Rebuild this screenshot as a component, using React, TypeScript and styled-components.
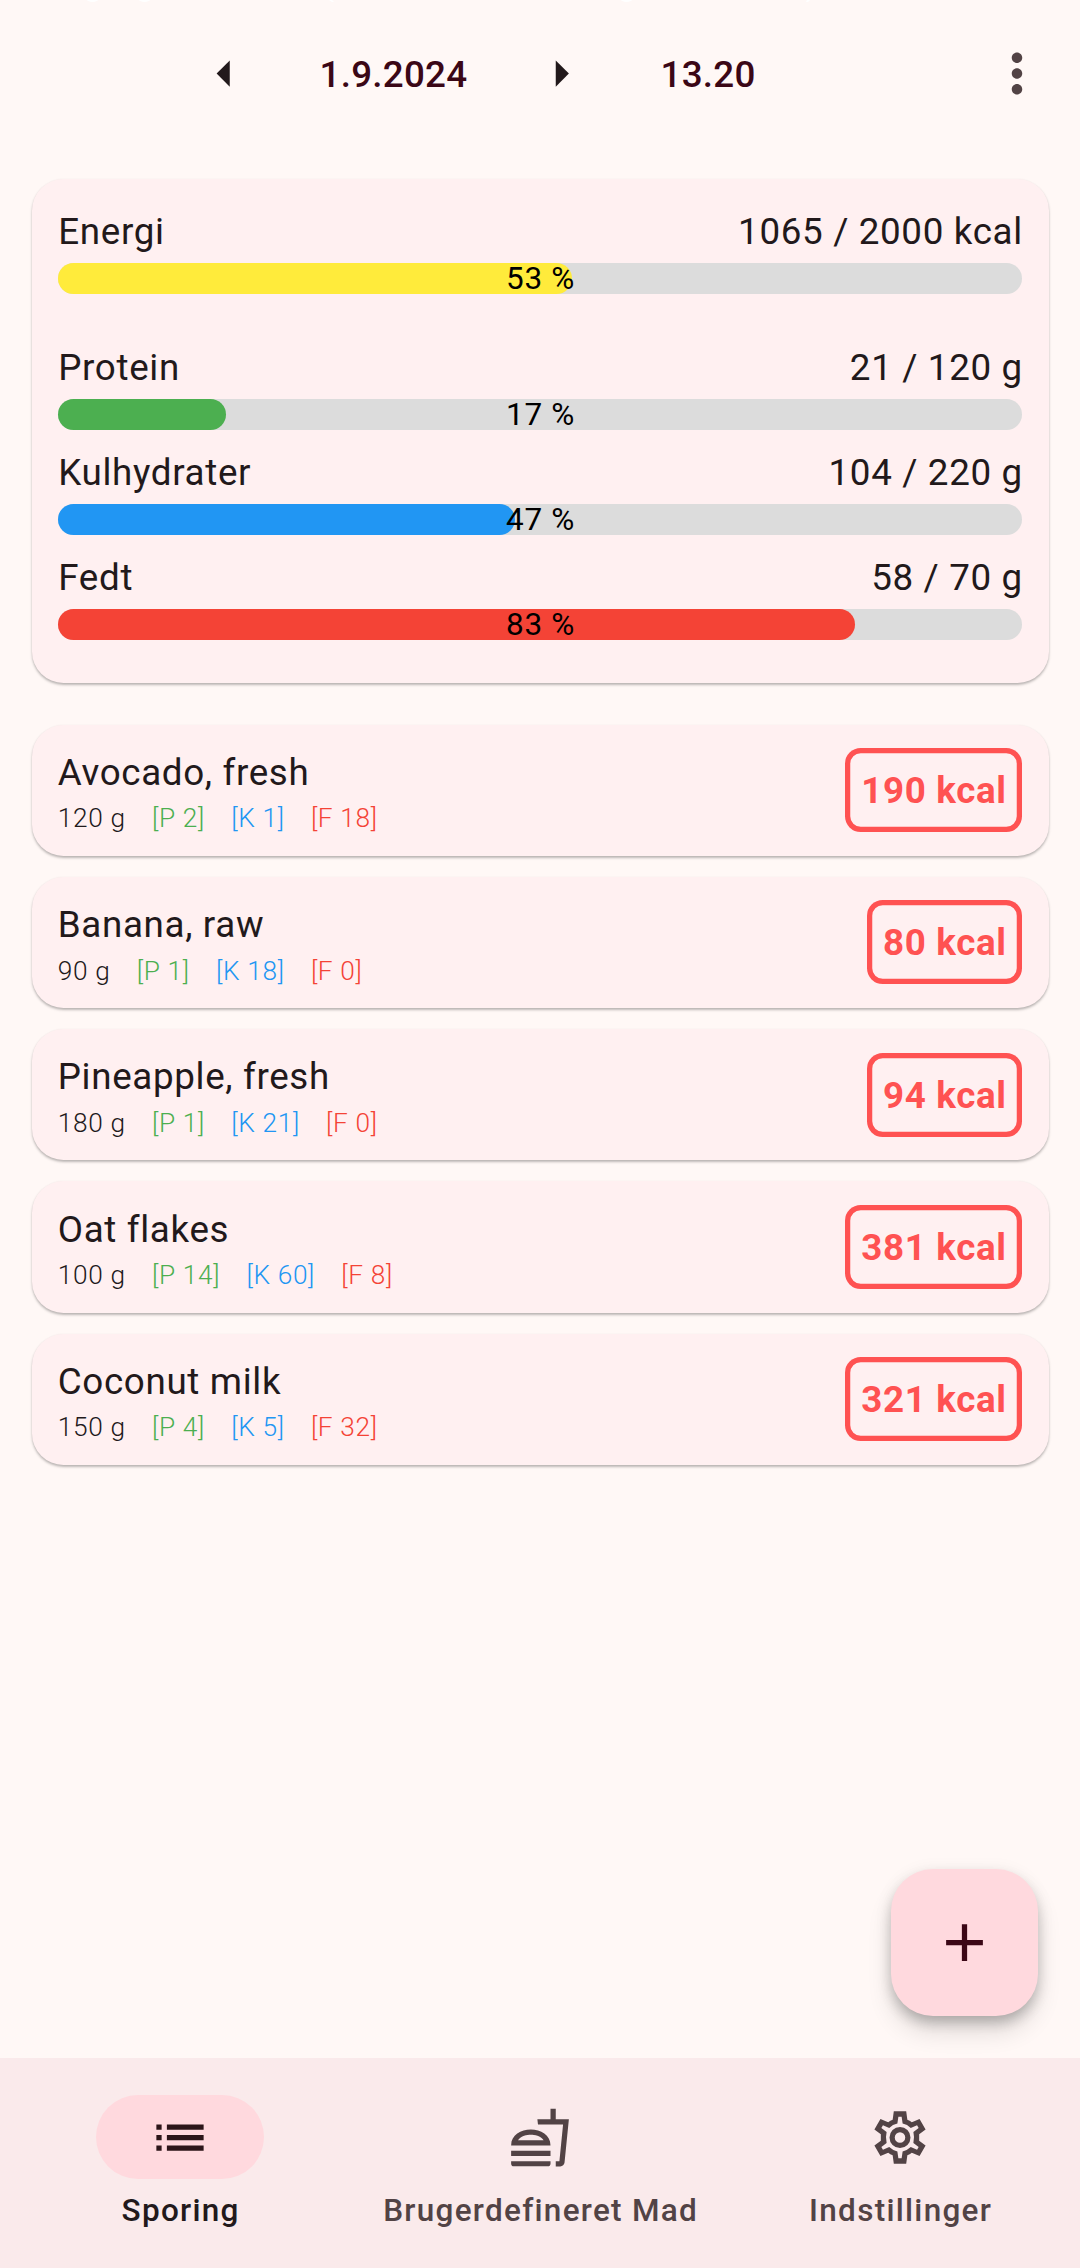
import React from "react";
import styled, { createGlobalStyle } from "styled-components";

const Global = createGlobalStyle`
  *, *::before, *::after { box-sizing: border-box; }
  body { margin: 0; background: #fff8f6; font-family: Roboto, "Noto Sans", sans-serif; }
`;

const Screen = styled.div`
  position: relative;
  display: flex;
  flex-direction: column;
  width: 1080px;
  height: 2268px;
  overflow: hidden;
  background: #fff8f6;
  color: #22191b;
  font-size: 36.75px;
`;

const StatusBar = styled.svg`
  position: absolute;
  top: 0;
  left: 0;
  fill: #fff;
`;

const Header = styled.header`
  display: flex;
  align-items: center;
  height: 147px;
  padding: 0 31px 0 193px;
  color: #3b0716;
  font-weight: 500;
  letter-spacing: 0.26px;
`;

const DateText = styled.span`
  width: 273px;
  padding: 2px 0 0 2px;
  text-align: center;
`;

const TimeText = styled.span`
  flex: 1;
  padding: 2px 0 0 67.5px;
`;

const Icon = styled.svg<{ $color: string }>`
  display: block;
  flex: none;
  height: 63px;
  fill: ${(p) => p.$color};
`;

const Main = styled.main`
  display: flex;
  flex: 1;
  flex-direction: column;
  padding: 31.5px 31.5px 0;
`;

const Card = styled.section`
  border-radius: 31.5px;
  background: #fff0f1;
  box-shadow: 0 2px 2.6px rgba(0, 0, 0, 0.25), 0 0.5px 2px rgba(0, 0, 0, 0.04);
`;

const Summary = styled(Card)`
  height: 504px;
  padding: 26.25px;
`;

const Meter = styled.div<{ $gap?: number }>`
  display: flex;
  flex-direction: column;
  height: 105px;
  margin-bottom: ${(p) => p.$gap ?? 0}px;
`;

const MeterHead = styled.div`
  display: flex;
  justify-content: space-between;
  height: 57.75px;
  padding-left: 0.5px;
  margin-right: -0.6px;
  line-height: 53.5px;
  letter-spacing: 0.66px;
`;

const Track = styled.div`
  position: relative;
  height: 31.5px;
  border-radius: 15.75px;
  background: #dcdcdc;
`;

const Fill = styled.div<{ $color: string }>`
  height: 100%;
  border-radius: 15.75px;
  background: ${(p) => p.$color};
`;

const Percent = styled.span`
  position: absolute;
  top: -3px;
  left: 0;
  width: 100%;
  height: 38px;
  padding-left: 1px;
  color: #000;
  font-size: 31.5px;
  line-height: 38px;
  letter-spacing: 0.66px;
  text-align: center;
`;

const FoodList = styled.div`
  display: flex;
  flex-direction: column;
  gap: 21px;
  margin-top: 42px;
`;

const FoodCard = styled(Card)`
  display: flex;
  align-items: center;
  justify-content: space-between;
  height: 131.25px;
  padding: 0 26.25px;
`;

const FoodInfo = styled.div`
  padding-top: 4px;
`;

const FoodName = styled.div`
  height: 52.5px;
  line-height: 52.5px;
  letter-spacing: 0.66px;
`;

const Macros = styled.div`
  display: flex;
  gap: 26.25px;
  height: 38px;
  font-size: 26.25px;
  font-weight: 300;
  line-height: 38px;
  letter-spacing: 0.66px;
`;

const Macro = styled.span<{ $color?: string }>`
  color: ${(p) => p.$color ?? "inherit"};
`;

const Badge = styled.div`
  height: 84px;
  padding: 0 15.5px 0 16.5px;
  border-radius: 15.75px;
  box-shadow: inset 0 0 0 5.25px #ff5252;
  color: #ff5252;
  font-weight: 700;
  line-height: 85px;
  letter-spacing: 0.66px;
`;

const Fab = styled.button`
  position: absolute;
  right: 42px;
  bottom: 252px;
  display: grid;
  place-items: center;
  width: 147px;
  height: 147px;
  padding: 0;
  border: 0;
  border-radius: 42px;
  background: #ffd9de;
  box-shadow: 0 8px 13px -2px rgba(0, 0, 0, 0.2), 0 16px 24px rgba(0, 0, 0, 0.12), 0 3px 18px rgba(0, 0, 0, 0.08);
`;

const Nav = styled.nav`
  position: relative;
  display: grid;
  grid-template-columns: repeat(3, 1fr);
  height: 210px;
  padding-top: 37px;
  background: #faeaeb;
`;

const NavItem = styled.div<{ $active?: boolean }>`
  display: flex;
  flex-direction: column;
  align-items: center;
  gap: 10px;
  color: ${(p) => (p.$active ? "#22191b" : "#524345")};
`;

const NavLabel = styled.span`
  padding-left: 1.3px;
  font-size: 31.5px;
  font-weight: 500;
  line-height: 43px;
  letter-spacing: 1.28px;
  white-space: nowrap;
`;

const Pill = styled.div<{ $active?: boolean }>`
  display: flex;
  justify-content: center;
  width: 168px;
  height: 84px;
  padding-top: 11px;
  border-radius: 42px;
  background: ${(p) => (p.$active ? "#ffd9de" : "transparent")};
`;

const GREEN = "#4caf50";
const BLUE = "#2196f3";
const RED = "#f44336";

const meters = [
  { name: "Energi", value: 1065, goal: 2000, unit: "kcal", share: 53.3, color: "#ffeb3b", gap: 31 },
  { name: "Protein", value: 21, goal: 120, unit: "g", share: 17.4, color: GREEN },
  { name: "Kulhydrater", value: 104, goal: 220, unit: "g", share: 47.4, color: BLUE },
  { name: "Fedt", value: 58, goal: 70, unit: "g", share: 82.7, color: RED },
];

const foods = [
  { name: "Avocado, fresh", grams: 120, p: 2, k: 1, f: 18, kcal: 190 },
  { name: "Banana, raw", grams: 90, p: 1, k: 18, f: 0, kcal: 80 },
  { name: "Pineapple, fresh", grams: 180, p: 1, k: 21, f: 0, kcal: 94 },
  { name: "Oat flakes", grams: 100, p: 14, k: 60, f: 8, kcal: 381 },
  { name: "Coconut milk", grams: 150, p: 4, k: 5, f: 32, kcal: 321 },
];

const paths = {
  left: "M14 7l-5 5 5 5V7z",
  right: "M10 17l5-5-5-5v10z",
  more: "M12 8c1.1 0 2-.9 2-2s-.9-2-2-2-2 .9-2 2 .9 2 2 2zm0 2c-1.1 0-2 .9-2 2s.9 2 2 2 2-.9 2-2-.9-2-2-2zm0 6c-1.1 0-2 .9-2 2s.9 2 2 2 2-.9 2-2-.9-2-2-2z",
  add: "M19 13h-6v6h-2v-6H5v-2h6V5h2v6h6v2z",
  list: "M3 13h2v-2H3v2zm0 4h2v-2H3v2zm0-8h2V7H3v2zm4 4h14v-2H7v2zm0 4h14v-2H7v2zM7 7v2h14V7H7z",
  food: "M1 21.98c0 .56.45 1.01 1.01 1.01H15c.56 0 1.01-.45 1.01-1.01V21H1v.98zM8.5 8.99C4.75 8.99 1 11 1 15h15c0-4-3.75-6.01-7.5-6.01zM3.62 13c1.11-1.55 3.47-2.01 4.88-2.01s3.77.46 4.88 2.01H3.62zM1 17h15v2H1zM18 5V1h-2v4h-5l.23 2h9.56l-1.4 14H18v2h1.72c.84 0 1.53-.65 1.63-1.47L23 5h-5z",
};

/* The half-pixel variant centres the 63px drawing in a 64px wide box. */
const Glyph = ({ name, color, half }: { name: keyof typeof paths; color: string; half?: boolean }) => (
  <Icon viewBox={half ? "-0.19 0 24.38 24" : "0 0 24 24"} width={half ? 64 : 63} $color={color}>
    <path d={paths[name]} />
  </Icon>
);

const Gear = () => (
  <Icon viewBox="-12.19 -12 24.38 24" width={64} $color="#524345">
    <path
      fillRule="evenodd"
      d="M-2.36 -10H2.36L2.8 -6.75Q3.7 -6.4 4.5 -5.78L7.45 -7.03L9.75 -3.08L7.3 -1.25V1.25L9.75 3.08L7.45 7.03L4.5 5.78Q3.7 6.4 2.8 6.75L2.36 10H-2.36L-2.8 6.75Q-3.7 6.4 -4.5 5.78L-7.45 7.03L-9.75 3.08L-7.3 1.25V-1.25L-9.75 -3.08L-7.45 -7.03L-4.5 -5.78Q-3.7 -6.4 -2.8 -6.75Z
      M-.62 -7.9L-1 -5.3Q-2.8 -4.9 -4.1 -3.65L-6.5 -4.65L-7.1 -3.6L-5.1 -2.05Q-5.6 0 -5.1 2.05L-7.1 3.6L-6.5 4.65L-4.1 3.65Q-2.8 4.9 -1 5.3L-.62 7.9H.62L1 5.3Q2.8 4.9 4.1 3.65L6.5 4.65L7.1 3.6L5.1 2.05Q5.6 0 5.1 -2.05L7.1 -3.6L6.5 -4.65L4.1 -3.65Q2.8 -4.9 1 -5.3L.62 -7.9Z"
    />
    <circle r="3" fill="none" stroke="#524345" strokeWidth="2" />
  </Icon>
);

export default function App() {
  return (
    <Screen>
      <Global />
      <StatusBar width="1080" height="3" viewBox="0 0 1080 3">
        <ellipse cx="92.5" cy="-1" rx="6" ry="3" />
        <ellipse cx="144.5" cy="-1" rx="6" ry="3" />
        <path d="M329 0h3l2 2h-2z" />
        <ellipse cx="626.5" cy="-1" rx="6" ry="3" />
        <path d="M807 0h3l-2 2h-2z" />
      </StatusBar>
      <Header>
        <Glyph name="left" color="#22191b" />
        <DateText>1.9.2024</DateText>
        <Glyph name="right" color="#22191b" half />
        <TimeText>13.20</TimeText>
        <Glyph name="more" color="#524345" half />
      </Header>
      <Main>
        <Summary>
          {meters.map((m) => (
            <Meter key={m.name} $gap={m.gap}>
              <MeterHead>
                <span>{m.name}</span>
                <span>{`${m.value} / ${m.goal} ${m.unit}`}</span>
              </MeterHead>
              <Track>
                <Fill $color={m.color} style={{ width: `${m.share}%` }} />
                <Percent>{`${Math.round(m.share)} %`}</Percent>
              </Track>
            </Meter>
          ))}
        </Summary>
        <FoodList>
          {foods.map((f) => (
            <FoodCard key={f.name}>
              <FoodInfo>
                <FoodName>{f.name}</FoodName>
                <Macros>
                  <Macro>{`${f.grams} g`}</Macro>
                  <Macro $color={GREEN}>{`[P ${f.p}]`}</Macro>
                  <Macro $color={BLUE}>{`[K ${f.k}]`}</Macro>
                  <Macro $color={RED}>{`[F ${f.f}]`}</Macro>
                </Macros>
              </FoodInfo>
              <Badge>{`${f.kcal} kcal`}</Badge>
            </FoodCard>
          ))}
        </FoodList>
      </Main>
      <Fab aria-label="Tilføj">
        <Glyph name="add" color="#3b0716" />
      </Fab>
      <Nav>
        <NavItem $active>
          <Pill $active>
            <Glyph name="list" color="#2c1519" half />
          </Pill>
          <NavLabel>Sporing</NavLabel>
        </NavItem>
        <NavItem>
          <Pill>
            <Glyph name="food" color="#524345" half />
          </Pill>
          <NavLabel>Brugerdefineret Mad</NavLabel>
        </NavItem>
        <NavItem>
          <Pill>
            <Gear />
          </Pill>
          <NavLabel>Indstillinger</NavLabel>
        </NavItem>
      </Nav>
    </Screen>
  );
}
